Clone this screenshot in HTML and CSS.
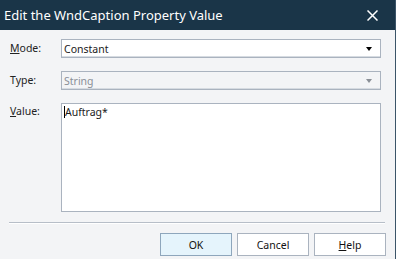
FILE: index.html
```html
<!DOCTYPE html>
<html>
<head>
    <title>Edit the WndCaption Property Value</title>
    <link rel="stylesheet" href="styles.css">
</head>
<body>
    <div class="dialog">
        <div class="titlebar">
            <span class="title">Edit the WndCaption Property Value</span>
            <svg class="close" width="11" height="11" viewBox="0 0 11 11">
                <path d="M0.5 0.5 L10.5 10.5 M10.5 0.5 L0.5 10.5" stroke="#fff" stroke-width="1.5" fill="none"/>
            </svg>
        </div>

        <div class="content">
            <div class="form">
                <label class="label"><u>M</u>ode:</label>
                <div class="combo">
                    <span>Constant</span>
                    <span class="arrow"></span>
                </div>

                <label class="label">Type:</label>
                <div class="combo disabled">
                    <span>String</span>
                    <span class="arrow"></span>
                </div>

                <label class="label label-top"><u>V</u>alue:</label>
                <div class="textarea"><span class="caret"></span>Auftrag*</div>
            </div>

            <div class="separator"></div>

            <div class="buttons">
                <button class="btn default">OK</button>
                <button class="btn">Cancel</button>
                <button class="btn"><u>H</u>elp</button>
            </div>
        </div>
    </div>
</body>
</html>
```

FILE: styles.css
```css
body { margin: 0; background: #ffffff; font-family: "Noto Sans", "Open Sans", sans-serif; font-size: 10.5px; color: #1a1a1a; }
.dialog { width: 395px; height: 259px; background: #f3f4f6; border-right: 1px solid #3b5468; }
.titlebar { height: 30px; background: #1a3548; color: #fff; display: flex; align-items: center; justify-content: space-between; padding: 0 17px 0 4px; }
.title { font-size: 13px; }
.close { display: block; }
.content { padding: 9px 0 0 0; }
.form { display: grid; grid-template-columns: 61px 320px; row-gap: 13px; }
.label { padding-left: 10px; line-height: 19px; color: #222; }
.label-top { line-height: 16px; }
.combo { height: 17px; border: 1px solid #aab3bf; background: #fff; display: flex; align-items: center; justify-content: space-between; padding: 0 8px 0 2px; box-shadow: inset 0 -1px 0 #d6dbe1; }
.combo.disabled { background: #f3f4f6; color: #8a8f96; }
.arrow { width: 0; height: 0; border-left: 3px solid transparent; border-right: 3px solid transparent; border-top: 4px solid #000; }
.combo.disabled .arrow { border-top-color: #8a8f96; }
.textarea { height: 103px; border: 1px solid #aab3bf; background: #fff; padding: 2px 2px; line-height: 13px; }
.caret { display: inline-block; width: 1px; height: 12px; background: #000; vertical-align: -2px; }
.separator { margin: 10px 10px 0 9px; height: 1px; background: #b7bec8; border-bottom: 1px solid #ffffff; }
.buttons { display: flex; justify-content: flex-end; gap: 5px; padding: 9px 9px 0 0; }
.btn { width: 72px; height: 23px; background: #fff; border: 1px solid #aab3bf; font-family: inherit; font-size: 10.5px; color: #111; padding: 0; }
.btn.default { background: #e5f4fc; border-color: #8ea6bc; }
```
